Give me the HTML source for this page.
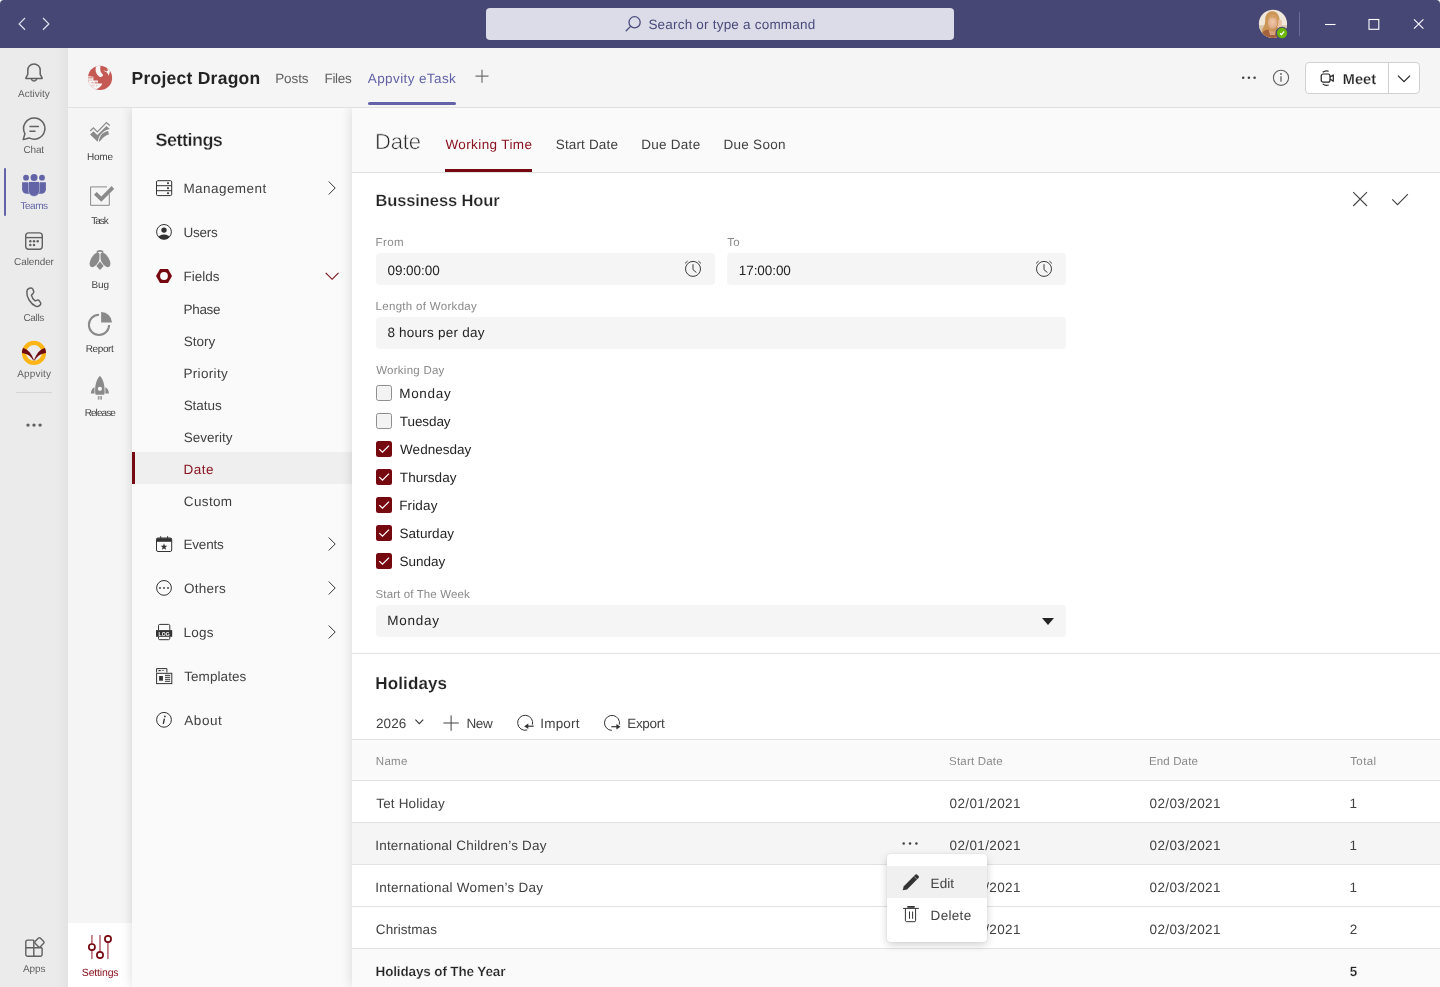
<!DOCTYPE html>
<html lang="en">
<head>
<meta charset="utf-8">
<title>Project Dragon - Appvity eTask - Settings</title>
<style>
*{box-sizing:border-box;margin:0;padding:0}
html,body{width:1440px;height:987px;overflow:hidden;background:#f5f5f5;font-family:"Liberation Sans",sans-serif;color:#252424}
.abs,.t{position:absolute}
.t{white-space:nowrap;line-height:1;text-rendering:geometricPrecision}
#topbg{left:0;top:0;width:1440px;height:8px;background:#fff}
#topbar{left:0;top:0;width:1440px;height:48px;background:#464775;border-radius:4px 4px 0 0}
#search{left:486px;top:8px;width:468px;height:32px;border-radius:4px;background:#dcdce8}
#rail{left:0;top:48px;width:68px;height:939px;background:#ebebeb}
#railsh{left:56px;top:48px;width:12px;height:939px;background:linear-gradient(90deg,rgba(0,0,0,0),rgba(0,0,0,.035))}
#chanhdr{left:68px;top:48px;width:1372px;height:60px;background:#f5f5f5;border-bottom:1px solid #e0e0e0}
#apprail{left:68px;top:108px;width:64px;height:879px;background:#f5f5f5}
#setpanel{left:132px;top:108px;width:220px;height:879px;background:#fafafa;box-shadow:0 0 11px rgba(0,0,0,.15);clip-path:inset(0 0 0 -20px)}
#content{left:352px;top:108px;width:1088px;height:879px;background:#fff;box-shadow:0 0 11px rgba(0,0,0,.15);clip-path:inset(0 0 0 -20px)}
#datehdr{left:352px;top:108px;width:1088px;height:65px;background:#fafafa;border-bottom:1px solid #e0e0e0}
#txt,#txt2{left:0;top:0;width:1440px;height:987px;will-change:transform}
</style>
</head>
<body>
<div id="topbg" class="abs"></div><div id="topbar" class="abs"></div><div id="search" class="abs"></div>
<div id="rail" class="abs"></div><div id="railsh" class="abs"></div>
<div id="chanhdr" class="abs"></div>
<div id="apprail" class="abs"></div>
<div class="abs" style="left:68px;top:923px;width:64px;height:64px;background:#fff"></div>
<div id="setpanel" class="abs"></div>
<div class="abs" style="left:132px;top:452px;width:220px;height:32px;background:#efefef"></div><div class="abs" style="left:132px;top:452px;width:3px;height:32px;background:#760810"></div>
<div id="content" class="abs"></div><div id="datehdr" class="abs"></div>
<svg class="abs" style="left:14px;top:14px" width="40" height="20" viewBox="0 0 40 20" ><g fill="none" stroke="#dfdfee" stroke-width="1.3"><path d="M11 4 5.2 9.9 11 15.8"/><path d="M29 4 34.8 9.9 29 15.8"/></g></svg>
<svg class="abs" style="left:622px;top:12px" width="24" height="24" viewBox="0 0 24 24" ><g fill="none" stroke="#4a4b7c" stroke-width="1.3" stroke-linecap="round"><circle cx="12.6" cy="10.3" r="5.6"/><path d="M8.6 14.4 4.2 18.8"/></g></svg>
<svg class="abs" style="left:1257px;top:8px" width="32" height="32" viewBox="0 0 32 32" ><defs><clipPath id="av"><circle cx="15.970" cy="15.800" r="14.100"/></clipPath><radialGradient id="fc" cx=".5" cy=".45" r=".6"><stop offset="0" stop-color="#f0c7a8"/><stop offset="1" stop-color="#dba683"/></radialGradient></defs>
<g clip-path="url(#av)"><rect width="32" height="32" fill="#efe7da"/><rect y="17.300" width="32" height="15" fill="#d9c6aa"/>
<path d="M15.500 3.300C10.500 3.300 8 7.500 8.200 12.600 8.300 16 6.800 18.500 5.200 21.700 4.500 25 6.500 28 9 30H20C19 26 19.500 22 21 19.500 22.800 16 23 12 22.100 8.900 21 5.200 18.500 3.300 15.500 3.300z" fill="#cb9558"/>
<ellipse cx="15.600" cy="14.600" rx="4.700" ry="6.200" fill="url(#fc)"/>
<path d="M10.600 12.500C10.800 8.500 13 6.500 16 6.600 19 6.700 21.200 9 21 12.800 19.500 10.500 17 9.300 14.500 9.400 12.500 9.500 11.300 10.800 10.600 12.500z" fill="#d4a062"/>
<path d="M21.300 12C22.500 11 24.500 11.300 24.900 13L24.600 19.500 21.500 21 20.300 18.500C21.300 16.500 21.500 14 21.300 12z" fill="#e9c3a8"/>
<path d="M3 32C3.500 25.500 7 21.500 11.500 21.500L14 25 19.800 21.200C21 24 20.500 28 20 32z" fill="#a5623c"/>
<path d="M11.500 20.500C12.500 22.500 14 23.500 15.500 23.500S18.500 22.500 19.500 20.500L18 27H13z" fill="#d9a27e"/></g>
<circle cx="25" cy="25" r="6.300" fill="#464775"/><circle cx="25" cy="25" r="5.150" fill="#6bb700"/>
<path d="M23.100 25.300 24.500 26.700 27.100 23.500" fill="none" stroke="#fff" stroke-width="1.300"/></svg>
<div class="abs" style="left:1299px;top:12px;width:1px;height:24px;background:#6c6d96"></div>
<svg class="abs" style="left:1320px;top:14px" width="110" height="20" viewBox="0 0 110 20" ><g fill="none" stroke="#fff" stroke-width="1.1"><path d="M5 10.5h10.5"/><rect x="49" y="5.5" width="9.8" height="9.8"/><path d="M94 5.3 103.4 14.7M103.4 5.3 94 14.7"/></g></svg>
<div class="abs" style="left:4px;top:168px;width:2px;height:48px;background:#6264a7;border-radius:1px"></div>
<svg class="abs" style="left:22px;top:60px" width="24" height="24" viewBox="0 0 24 24" ><g fill="none" stroke="#616161" stroke-width="1.500" stroke-linejoin="round"><path d="M12 4c-3.500 0-6.200 2.800-6.200 6.300v4.100l-1.900 3.400c-.2.400 0 .8.500.8h15.200c.5 0 .7-.4.500-.8l-1.900-3.400v-4.100c0-3.500-2.700-6.300-6.200-6.300z"/><path d="M9.300 18.900a2.800 2.800 0 0 0 5.400 0"/></g></svg>
<svg class="abs" style="left:20px;top:115px" width="28" height="28" viewBox="0 0 28 28" ><g fill="none" stroke="#616161" stroke-width="1.500" stroke-linecap="round" stroke-linejoin="round"><path d="M14.250 3a10.600 10.600 0 1 1-5 19.950L3.200 24.600l1.700-5.900A10.600 10.600 0 0 1 14.250 3z"/><path d="M10 11.500h8.400M10 16.300h5"/></g></svg>
<svg class="abs" style="left:20px;top:172px" width="28" height="26" viewBox="0 0 28 26" ><g fill="#6264a7"><circle cx="14.050" cy="5.400" r="3.500"/><circle cx="6.050" cy="5.700" r="2.900"/><circle cx="22" cy="5.700" r="2.900"/><path d="M2.100 10.200H10V21.800H6.700A4.600 4.600 0 0 1 2.100 17.200z"/><path d="M25.900 10.200H18V21.800H21.300A4.600 4.600 0 0 0 25.900 17.200z"/><path d="M9 10H19V18.900A5 5 0 0 1 9 18.900z" stroke="#b9bada" stroke-width="1.300"/><path d="M8 9.300H20V10.600H8z" fill="#ebebeb"/><path d="M9 10H19V18.900A5 5 0 0 1 9 18.900z"/></g></svg>
<svg class="abs" style="left:22px;top:229px" width="24" height="24" viewBox="0 0 24 24" ><g fill="none" stroke="#616161" stroke-width="1.4"><rect x="3.7" y="3.9" width="16.6" height="16.4" rx="3"/><path d="M3.7 8.6h16.6"/></g><g fill="#616161"><circle cx="8.300" cy="12.300" r="1.250"/><circle cx="12" cy="12.300" r="1.250"/><circle cx="15.700" cy="12.300" r="1.250"/><circle cx="8.300" cy="16.100" r="1.250"/><circle cx="12" cy="16.100" r="1.250"/></g></svg>
<svg class="abs" style="left:22px;top:284px" width="24" height="24" viewBox="0 0 24 24" ><path transform="translate(-1.1 .1) translate(12 12) scale(.92) translate(-12 -12)" d="M8.4 3.5l1.1-.3c.9-.3 1.9.2 2.3 1.1l1 2.3c.4.8.1 1.800-.5 2.4l-1.6 1.500c-.2.2-.3.5-.2.800.4 1.800 2.200 4.600 3.600 5.600.2.200.5.200.8.100l1.800-.6c.8-.3 1.800 0 2.300.8l1.300 1.900c.5.800.4 1.900-.3 2.500l-.9.800c-1 .9-2.400 1.200-3.700.7-5.800-2.300-10.500-9.900-10-16 .1-1.600 1.200-3 2.700-3.600z" fill="none" stroke="#616161" stroke-width="1.600" stroke-linejoin="round"/></svg>
<svg class="abs" style="left:21px;top:340px" width="26" height="26" viewBox="0 0 26 26" ><circle cx="12.970" cy="12.970" r="10" fill="none" stroke="#fcb514" stroke-width="4.250"/><g fill="#6e0a12"><path d="M2.100 7.900C4.500 8.600 7.500 10.500 8.900 12.600 10.300 14.600 11.700 17 12.700 19.400L12.400 20.700C10.900 18 9.800 16.900 8.400 15.700 6.500 14.200 4 13.300 1 12.900 .900 11.200 1.300 9.400 2.100 7.900z"/><path d="M23.840 7.900C21.440 8.600 18.440 10.500 17.040 12.600 15.640 14.600 14.240 17 13.240 19.400L13.540 20.700C15.040 18 16.140 16.900 17.540 15.700 19.440 14.200 21.940 13.300 24.940 12.900 25.040 11.200 24.640 9.400 23.840 7.900z"/></g></svg>
<div class="abs" style="left:16px;top:392px;width:36px;height:1px;background:#d4d4d4"></div>
<svg class="abs" style="left:24px;top:420px" width="20" height="10" viewBox="0 0 20 10" ><g fill="#616161"><circle cx="4" cy="5.1" r="1.7"/><circle cx="10" cy="5.1" r="1.7"/><circle cx="16.100" cy="5.1" r="1.7"/></g></svg>
<svg class="abs" style="left:22px;top:935px" width="26" height="24" viewBox="0 0 26 24" ><g fill="none" stroke="#616161" stroke-width="1.400" stroke-linejoin="round"><path d="M11.800 5.100H5.600A1.800 1.800 0 0 0 3.800 6.900V19.400A1.800 1.800 0 0 0 5.600 21.200H18.300A1.800 1.800 0 0 0 20.100 19.400V12.800"/><path d="M11.800 5.100V21.200M3.800 12.800H20.100"/><path d="M16.500 3.100a1.300 1.300 0 0 1 1.800 0l3.400 3.400a1.300 1.300 0 0 1 0 1.800l-3.400 3.400a1.300 1.300 0 0 1-1.800 0l-3.400-3.400a1.300 1.300 0 0 1 0-1.800z" fill="#ebebeb"/></g></svg>
<svg class="abs" style="left:86px;top:63px" width="28" height="28" viewBox="0 0 28 28" ><defs><clipPath id="lg"><circle cx="14.050" cy="14.900" r="12.100"/></clipPath></defs><g clip-path="url(#lg)"><rect width="28" height="28" fill="#c55a54"/><g fill="#f5f5f5"><path d="M10.300 2.500C8.800 7 9.600 11.300 13.900 13.900 15.500 14.300 17.300 13.300 17 11.600 15 10 13.500 7 14.600 3.300L12.400 2z"/><path d="M17.300 2.700C20.500 3.200 21.600 5.500 21.800 7.600L20 8.700C21.500 10 22.300 11.500 22.600 12.700L24.100 8.200 28 4V0H17z"/><path d="M17.200 7.100 20.600 8.400 19.500 9.100z"/><path d="M0 13 7.400 13.700V17.400H11.900V20.600H16.300C15.800 23 13 25.300 9.300 26.700L0 28z"/></g><g fill="#c55a54"><rect x="2.100" y="14" width="4.700" height="1.500" opacity=".55"/><rect x="2.300" y="16.500" width="4.300" height="1.200" opacity=".3"/><rect x="8.700" y="18.800" width="2.900" height="1.800" opacity=".6"/><rect x="5.200" y="19" width="2.600" height="1.300" opacity=".4"/><rect x="5.500" y="21.700" width="3.200" height="1.600" opacity=".22"/><rect x="10" y="22" width="1.600" height="1" opacity=".35"/></g></g></svg>
<div class="abs" style="left:368px;top:102px;width:88px;height:2.600px;background:#6264a7;border-radius:1.500px"></div>
<svg class="abs" style="left:474px;top:68px" width="16" height="16" viewBox="0 0 16 16" ><path d="M8 1.700v13M1.500 8.200h13" stroke="#717171" stroke-width="1.2" fill="none"/></svg>
<svg class="abs" style="left:1240px;top:72px" width="18" height="12" viewBox="0 0 18 12" ><g fill="#424242"><circle cx="3.200" cy="5.800" r="1.250"/><circle cx="8.900" cy="5.800" r="1.250"/><circle cx="14.600" cy="5.800" r="1.250"/></g></svg>
<svg class="abs" style="left:1271px;top:68px" width="20" height="20" viewBox="0 0 20 20" ><circle cx="10" cy="9.800" r="7.600" fill="none" stroke="#616161" stroke-width="1.1"/><path d="M10 8.300v5.500" stroke="#616161" stroke-width="1.300"/><circle cx="10" cy="6" r=".9" fill="#616161"/></svg>
<div class="abs" style="left:1305px;top:62px;width:115px;height:32px;background:#fff;border:1px solid #d1d1d1;border-radius:4px"></div><div class="abs" style="left:1388px;top:63px;width:1px;height:30px;background:#d1d1d1"></div>
<svg class="abs" style="left:1318px;top:68px" width="20" height="20" viewBox="0 0 20 20" ><g fill="none" stroke="#252424" stroke-width="1.200" stroke-linejoin="round"><rect x="3.200" y="6" width="8.800" height="8.200" rx="2"/><path d="M12 9.100 15.300 7v6.200L12 11.100"/><path d="M4.700 4.300a6.300 6.300 0 0 1 6-1.100M4.700 15.900a6.300 6.300 0 0 0 6 1.100"/></g></svg>
<svg class="abs" style="left:1396px;top:72px" width="16" height="12" viewBox="0 0 16 12" ><path d="M2 3.600 8 9.600 14 3.600" fill="none" stroke="#252424" stroke-width="1.200"/></svg>
<svg class="abs" style="left:88px;top:120px" width="26" height="26" viewBox="0 0 26 26" ><path d="M2.250 11.050 5.400 7.800 9.350 11.900 18.400 2.550 21.800 5.500" fill="none" stroke="#8a8a8a" stroke-width="1.250"/><path d="M2.100 14.450 5.400 11.200 9.350 15 18.400 5.950 21.800 9.050C18 9.800 14.500 12 12.600 14.500 11 16.600 10.200 19 9.900 21.300L9.350 21.500z" fill="#8a8a8a"/><path d="M10.800 21.500C11.200 19 11.800 17 13 15.200 14.800 12.800 17.300 11.600 20.100 11.050L21 14.450C18.500 15 16 16.600 14.300 18.500 13.200 19.800 12.400 20.600 11.900 21.500z" fill="#8a8a8a"/></svg>
<svg class="abs" style="left:88px;top:184px" width="28" height="24" viewBox="0 0 28 24" ><path d="M21.300 9.800V21.300H2.600V2.900H19" fill="none" stroke="#8a8a8a" stroke-width="1" stroke-linejoin="round"/><path d="M6 10.800 8.700 7.900 13.300 12.400 23.700 2 26.100 4.900 13.300 17.800z" fill="#8a8a8a"/></svg>
<svg class="abs" style="left:88px;top:248px" width="24" height="24" viewBox="0 0 24 24" ><defs><clipPath id="bl"><rect x="0" y="0" width="11.450" height="24"/></clipPath><clipPath id="br"><rect x="12.550" y="0" width="11.450" height="24"/></clipPath></defs><path d="M8.900 4.700A3.300 2.900 0 0 1 15.100 4.700" fill="none" stroke="#8a8a8a" stroke-width="1.700"/><g fill="#8a8a8a"><g clip-path="url(#bl)"><ellipse cx="6.900" cy="11.900" rx="4" ry="8" transform="rotate(30 6.900 11.900)"/></g><g clip-path="url(#br)"><ellipse cx="17.100" cy="11.900" rx="4" ry="8" transform="rotate(-30 17.100 11.900)"/></g><path d="M12 13.600 15.600 17.900 12 21.900 8.400 17.900z"/></g></svg>
<svg class="abs" style="left:86px;top:310px" width="28" height="28" viewBox="0 0 28 28" ><path d="M13 4.800A10.100 10.100 0 1 0 23.100 14.900" fill="none" stroke="#8a8a8a" stroke-width="2"/><path d="M15.100 2.100A10.800 10.800 0 0 1 26 12.500H15.100z" fill="#8a8a8a"/></svg>
<svg class="abs" style="left:88px;top:374px" width="24" height="28" viewBox="0 0 24 28" ><g fill="#8a8a8a"><path d="M11.900 1.700C15.300 5.500 17 10.500 16.600 19.300 16.600 20.300 15.800 20.800 14.800 20.800H9C8 20.800 7.200 20.300 7.200 19.300 6.800 10.500 8.500 5.500 11.900 1.700z"/><path d="M6.500 13.300V19.600H2.900C2.900 16.800 4.200 14.500 6.500 13.300z"/><path d="M17.300 13.300V19.600H20.900C20.900 16.800 19.600 14.500 17.300 13.300z"/></g><circle cx="11.900" cy="14.800" r="2.100" fill="#f5f5f5"/><g fill="#9c9c9c"><rect x="9.800" y="22.100" width="1.700" height="3.500"/><rect x="12.300" y="22.100" width="1.700" height="3.500"/></g></svg>
<svg class="abs" style="left:86px;top:933px" width="28" height="28" viewBox="0 0 28 28" ><g stroke="#b4656c" stroke-width="1.500"><path d="M5.900 2.100v24M14 2.100v24M21.900 2.100v24"/></g><g fill="#fff" stroke="#760810" stroke-width="1.700"><circle cx="5.900" cy="14.100" r="3.100"/><circle cx="14" cy="22" r="3.100"/><circle cx="22" cy="6" r="3.100"/></g></svg>
<svg class="abs" style="left:155px;top:179px" width="18" height="18" viewBox="0 0 18 18" ><g fill="none" stroke="#333333" stroke-width="1"><rect x="1.500" y="1.700" width="15.200" height="14.900" rx="1.200"/><path d="M1.500 6.700h15.200M1.500 11.700h15.200"/></g><g fill="#333333"><rect x="12.100" y="3.300" width="1.800" height="1.800"/><rect x="12.100" y="8.300" width="1.800" height="1.800"/><rect x="12.100" y="13.300" width="1.800" height="1.800"/></g></svg>
<svg class="abs" style="left:155px;top:223px" width="18" height="18" viewBox="0 0 18 18" ><defs><clipPath id="uc"><circle cx="9" cy="8.900" r="7.400"/></clipPath></defs><circle cx="9" cy="8.900" r="7.400" fill="none" stroke="#333333" stroke-width="1"/><circle cx="9" cy="7.100" r="2.700" fill="#333333"/><ellipse cx="9" cy="15.500" rx="6.200" ry="4" fill="#333333" clip-path="url(#uc)"/></svg>
<svg class="abs" style="left:155px;top:268px" width="18" height="16" viewBox="0 0 18 16" ><path d="M1 8 5 1h8l4 7-4 7H5z" fill="#760810"/><circle cx="9" cy="8" r="3.900" fill="#fafafa"/></svg>
<svg class="abs" style="left:326px;top:180px" width="12" height="16" viewBox="0 0 12 16" ><path d="M2.700 1.500 9.200 8 2.700 14.500" fill="none" stroke="#333333" stroke-width="1"/></svg>
<svg class="abs" style="left:326px;top:536px" width="12" height="16" viewBox="0 0 12 16" ><path d="M2.700 1.500 9.200 8 2.700 14.500" fill="none" stroke="#333333" stroke-width="1"/></svg>
<svg class="abs" style="left:326px;top:580px" width="12" height="16" viewBox="0 0 12 16" ><path d="M2.700 1.500 9.200 8 2.700 14.500" fill="none" stroke="#333333" stroke-width="1"/></svg>
<svg class="abs" style="left:326px;top:624px" width="12" height="16" viewBox="0 0 12 16" ><path d="M2.700 1.500 9.200 8 2.700 14.500" fill="none" stroke="#333333" stroke-width="1"/></svg>
<svg class="abs" style="left:324px;top:270px" width="16" height="12" viewBox="0 0 16 12" ><path d="M1.700 2.900 8.100 9.300 14.500 2.900" fill="none" stroke="#760810" stroke-width="1.100"/></svg>
<svg class="abs" style="left:155px;top:535px" width="18" height="18" viewBox="0 0 18 18" ><rect x="1.500" y="3" width="15.200" height="13.500" rx="1.500" fill="none" stroke="#333333" stroke-width="1"/><path d="M1.500 3.200h15.200v3.600H1.500z" fill="#333333"/><path d="M5.700 1.200v2.500M12.600 1.200v2.500" stroke="#333333" stroke-width="1"/><path d="M9 8.300 9.900 10.700 12.400 10.800 10.400 12.300 11.100 14.800 9 13.400 6.900 14.800 7.600 12.300 5.600 10.800 8.100 10.700z" fill="#333333"/></svg>
<svg class="abs" style="left:155px;top:579px" width="18" height="18" viewBox="0 0 18 18" ><circle cx="9" cy="8.900" r="7.400" fill="none" stroke="#333333" stroke-width="1"/><g fill="#333333"><circle cx="5" cy="8.900" r=".95"/><circle cx="9" cy="8.900" r=".95"/><circle cx="13" cy="8.900" r=".95"/></g></svg>
<svg class="abs" style="left:155px;top:623px;will-change:transform" width="18" height="18" viewBox="0 0 18 18" ><path d="M3.500 7V2.700A1.300 1.300 0 0 1 4.800 1.400h8.700a1.300 1.300 0 0 1 1.300 1.300V7M3.500 14v1.400a1.300 1.300 0 0 0 1.300 1.300h8.700a1.300 1.300 0 0 0 1.300-1.300V14" fill="none" stroke="#333333" stroke-width="1"/><rect x="1" y="7.100" width="16.200" height="6.700" fill="#333333"/><text x="9.100" y="12.500" font-family="Liberation Sans,sans-serif" font-size="5.600" font-weight="700" fill="#fff" text-anchor="middle" textLength="11" lengthAdjust="spacingAndGlyphs">LOG</text></svg>
<svg class="abs" style="left:155px;top:667px" width="18" height="18" viewBox="0 0 18 18" ><g fill="none" stroke="#333333" stroke-width="1"><path d="M1.600 5.500V1.600h10.300v3.900"/><rect x="1.600" y="6.300" width="15.200" height="10.300"/><path d="M10 8.300h5.200M10 10.300h5.200M10 12.300h5.200M10 14.300h5.200"/></g><rect x="4.100" y="9" width="3.800" height="4.700" fill="#333333"/><rect x="3.500" y="3" width="2.200" height="1.200" fill="#333333"/><rect x="6.700" y="3.100" width="2.400" height=".9" fill="#777"/></svg>
<svg class="abs" style="left:155px;top:711px" width="18" height="18" viewBox="0 0 18 18" ><circle cx="9" cy="8.800" r="7.400" fill="none" stroke="#333333" stroke-width="1"/><path d="M9.400 7.600 8.300 12.800" stroke="#333333" stroke-width="1.400"/><circle cx="9.900" cy="5.400" r=".9" fill="#333333"/></svg>
<div class="abs" style="left:445px;top:169px;width:87px;height:3px;background:#760810;"></div>
<svg class="abs" style="left:1350px;top:189px" width="20" height="20" viewBox="0 0 20 20" ><path d="M3.200 3.200 17 17M17 3.200 3.200 17" stroke="#424242" stroke-width="1.100" fill="none"/></svg>
<svg class="abs" style="left:1390px;top:190px" width="20" height="18" viewBox="0 0 20 18" ><path d="M2.200 9.300 7.500 14.600 17.900 4.200" stroke="#424242" stroke-width="1.100" fill="none"/></svg>
<div class="abs" style="left:376px;top:253px;width:339px;height:32px;background:#f5f5f5;border-radius:4px"></div>
<div class="abs" style="left:727px;top:253px;width:339px;height:32px;background:#f5f5f5;border-radius:4px"></div>
<div class="abs" style="left:376px;top:317px;width:690px;height:32px;background:#f5f5f5;border-radius:4px"></div>
<div class="abs" style="left:376px;top:605px;width:690px;height:32px;background:#f5f5f5;border-radius:4px"></div>
<svg class="abs" style="left:683px;top:259px" width="20" height="20" viewBox="0 0 20 20" ><g fill="none" stroke="#333333" stroke-width=".95"><circle cx="10" cy="9.900" r="7.500"/><path d="M10 5.200v5.500l3.400 2.800"/><path d="M2.100 4.400 4.600 2.100M15.400 2.100 17.900 4.400"/></g></svg>
<svg class="abs" style="left:1034px;top:259px" width="20" height="20" viewBox="0 0 20 20" ><g fill="none" stroke="#333333" stroke-width=".95"><circle cx="10" cy="9.900" r="7.500"/><path d="M10 5.200v5.500l3.400 2.800"/><path d="M2.100 4.400 4.600 2.100M15.400 2.100 17.900 4.400"/></g></svg>
<svg class="abs" style="left:1040px;top:616px" width="16" height="10" viewBox="0 0 16 10" ><path d="M2 2h12L8 9z" fill="#252424"/></svg>
<div class="abs" style="left:376px;top:385px;width:16px;height:16px;background:#f3f3f3;border:1px solid #8f8f8f;border-radius:2.500px"></div>
<div class="abs" style="left:376px;top:413px;width:16px;height:16px;background:#f3f3f3;border:1px solid #8f8f8f;border-radius:2.500px"></div>
<div class="abs" style="left:376px;top:441px;width:16px;height:16px;background:#760810;border-radius:2.500px"></div>
<svg class="abs" style="left:376px;top:441px" width="16" height="16" viewBox="0 0 16 16" ><path d="M3.300 8.100 6.500 11.200 13 4.600" fill="none" stroke="#fff" stroke-width="1.300"/></svg>
<div class="abs" style="left:376px;top:469px;width:16px;height:16px;background:#760810;border-radius:2.500px"></div>
<svg class="abs" style="left:376px;top:469px" width="16" height="16" viewBox="0 0 16 16" ><path d="M3.300 8.100 6.500 11.200 13 4.600" fill="none" stroke="#fff" stroke-width="1.300"/></svg>
<div class="abs" style="left:376px;top:497px;width:16px;height:16px;background:#760810;border-radius:2.500px"></div>
<svg class="abs" style="left:376px;top:497px" width="16" height="16" viewBox="0 0 16 16" ><path d="M3.300 8.100 6.500 11.200 13 4.600" fill="none" stroke="#fff" stroke-width="1.300"/></svg>
<div class="abs" style="left:376px;top:525px;width:16px;height:16px;background:#760810;border-radius:2.500px"></div>
<svg class="abs" style="left:376px;top:525px" width="16" height="16" viewBox="0 0 16 16" ><path d="M3.300 8.100 6.500 11.200 13 4.600" fill="none" stroke="#fff" stroke-width="1.300"/></svg>
<div class="abs" style="left:376px;top:553px;width:16px;height:16px;background:#760810;border-radius:2.500px"></div>
<svg class="abs" style="left:376px;top:553px" width="16" height="16" viewBox="0 0 16 16" ><path d="M3.300 8.100 6.500 11.200 13 4.600" fill="none" stroke="#fff" stroke-width="1.300"/></svg>
<div class="abs" style="left:352px;top:653px;width:1088px;height:1px;background:#e3e3e3;"></div>
<svg class="abs" style="left:413px;top:717px" width="12" height="10" viewBox="0 0 12 10" ><path d="M2.400 2.700 6.300 6.600 10.200 2.700" fill="none" stroke="#333333" stroke-width="1.100"/></svg>
<svg class="abs" style="left:443px;top:715px" width="16" height="16" viewBox="0 0 16 16" ><path d="M8.100 .400v15.400M.400 8h15.400" stroke="#424242" stroke-width="1" fill="none"/></svg>
<svg class="abs" style="left:515px;top:713px" width="20" height="20" viewBox="0 0 20 20" ><path d="M17.400 11.700A7.500 7.500 0 1 0 12.200 17" fill="none" stroke="#333333" stroke-width="1"/><path d="M18.600 13.200H12" stroke="#333333" stroke-width="1.200"/><path d="M9.200 13.200 13.300 10.400V16z" fill="#333333"/></svg>
<svg class="abs" style="left:602px;top:713px" width="20" height="20" viewBox="0 0 20 20" ><path d="M17.300 11.700A7.500 7.500 0 1 0 9.800 17.400" fill="none" stroke="#333333" stroke-width="1"/><path d="M9.300 13.700H15.500" stroke="#333333" stroke-width="1.200"/><path d="M18.500 13.700 14.400 10.900V16.500z" fill="#333333"/></svg>
<div class="abs" style="left:352px;top:739px;width:1088px;height:1px;background:#e3e3e3;"></div>
<div class="abs" style="left:352px;top:740px;width:1088px;height:40px;background:#fafafa;"></div>
<div class="abs" style="left:352px;top:780px;width:1088px;height:1px;background:#e3e3e3;"></div>
<div class="abs" style="left:352px;top:822px;width:1088px;height:1px;background:#e3e3e3;"></div>
<div class="abs" style="left:352px;top:864px;width:1088px;height:1px;background:#e3e3e3;"></div>
<div class="abs" style="left:352px;top:906px;width:1088px;height:1px;background:#e3e3e3;"></div>
<div class="abs" style="left:352px;top:948px;width:1088px;height:1px;background:#e3e3e3;"></div>
<div class="abs" style="left:352px;top:823px;width:1088px;height:41px;background:#f5f5f5;"></div>
<div class="abs" style="left:352px;top:949px;width:1088px;height:38px;background:#fafafa;"></div>
<svg class="abs" style="left:900px;top:839px" width="20" height="10" viewBox="0 0 20 10" ><g fill="#424242"><circle cx="3.700" cy="4.600" r="1.250"/><circle cx="10" cy="4.600" r="1.250"/><circle cx="16.400" cy="4.600" r="1.250"/></g></svg>
<div id="txt" class="abs">
<span class="t" style="left:648.42px;top:18.00px;font-size:13.5px;color:#4a4b7c;letter-spacing:0.206px">Search or type a command</span>
<span class="t" style="left:131.56px;top:70.00px;font-size:17.5px;color:#252424;font-weight:700;letter-spacing:0.249px">Project Dragon</span>
<span class="t" style="left:275.20px;top:72.00px;font-size:13.5px;color:#616161;letter-spacing:-0.089px">Posts</span>
<span class="t" style="left:324.43px;top:72.00px;font-size:13.5px;color:#616161;letter-spacing:-0.283px">Files</span>
<span class="t" style="left:367.81px;top:72.00px;font-size:13.5px;color:#6264a7;letter-spacing:0.393px">Appvity eTask</span>
<span class="t" style="left:1342.72px;top:73.00px;font-size:14.5px;color:#252424;font-weight:700;letter-spacing:0.100px;-webkit-text-stroke:0.2px #fff">Meet</span>
<span class="t" style="left:18.09px;top:90.00px;font-size:10px;color:#616161;letter-spacing:-0.009px">Activity</span>
<span class="t" style="left:23.59px;top:146.00px;font-size:10px;color:#616161;letter-spacing:-0.201px">Chat</span>
<span class="t" style="left:14.12px;top:258.00px;font-size:10px;color:#616161;letter-spacing:-0.110px">Calender</span>
<span class="t" style="left:23.44px;top:314.00px;font-size:10px;color:#616161;letter-spacing:-0.352px">Calls</span>
<span class="t" style="left:17.23px;top:370.00px;font-size:10px;color:#616161;letter-spacing:0.172px">Appvity</span>
<span class="t" style="left:22.97px;top:965.00px;font-size:10px;color:#616161;letter-spacing:-0.079px">Apps</span>
<span class="t" style="left:20.53px;top:202.00px;font-size:10px;color:#6264a7;letter-spacing:-0.502px">Teams</span>
<span class="t" style="left:86.89px;top:153.00px;font-size:10px;color:#424242;letter-spacing:-0.204px">Home</span>
<span class="t" style="left:91.20px;top:217.00px;font-size:10px;color:#424242;letter-spacing:-1.025px">Task</span>
<span class="t" style="left:91.59px;top:281.00px;font-size:10px;color:#424242;letter-spacing:-0.135px">Bug</span>
<span class="t" style="left:85.65px;top:345.00px;font-size:10px;color:#424242;letter-spacing:-0.364px">Report</span>
<span class="t" style="left:84.65px;top:409.00px;font-size:10px;color:#424242;letter-spacing:-0.912px">Release</span>
<span class="t" style="left:81.87px;top:968.00px;font-size:10.5px;color:#8a1420;letter-spacing:-0.174px">Settings</span>
<span class="t" style="left:155.38px;top:131.00px;font-size:18px;color:#252424;font-weight:700;letter-spacing:-0.500px;-webkit-text-stroke:0.28px #fafafa">Settings</span>
<span class="t" style="left:183.41px;top:182.00px;font-size:13.5px;color:#424242;letter-spacing:0.441px">Management</span>
<span class="t" style="left:183.62px;top:226.00px;font-size:13.5px;color:#424242;letter-spacing:-0.259px">Users</span>
<span class="t" style="left:183.41px;top:270.00px;font-size:13.5px;color:#424242;letter-spacing:0.017px">Fields</span>
<span class="t" style="left:183.41px;top:303.00px;font-size:13.5px;color:#424242;letter-spacing:-0.271px">Phase</span>
<span class="t" style="left:183.63px;top:335.00px;font-size:13.5px;color:#424242;letter-spacing:0.053px">Story</span>
<span class="t" style="left:183.41px;top:367.00px;font-size:13.5px;color:#424242;letter-spacing:0.336px">Priority</span>
<span class="t" style="left:183.63px;top:399.00px;font-size:13.5px;color:#424242;letter-spacing:-0.026px">Status</span>
<span class="t" style="left:183.63px;top:431.00px;font-size:13.5px;color:#424242;letter-spacing:0.018px">Severity</span>
<span class="t" style="left:183.40px;top:463.00px;font-size:13.5px;color:#8a1420;letter-spacing:0.511px">Date</span>
<span class="t" style="left:183.87px;top:495.00px;font-size:13.5px;color:#424242;letter-spacing:0.348px">Custom</span>
<span class="t" style="left:183.41px;top:538.00px;font-size:13.5px;color:#424242;letter-spacing:-0.166px">Events</span>
<span class="t" style="left:184.02px;top:582.00px;font-size:13.5px;color:#424242;letter-spacing:0.244px">Others</span>
<span class="t" style="left:183.41px;top:626.00px;font-size:13.5px;color:#424242;letter-spacing:0.240px">Logs</span>
<span class="t" style="left:184.22px;top:670.00px;font-size:13.5px;color:#424242;letter-spacing:0.067px">Templates</span>
<span class="t" style="left:184.25px;top:714.00px;font-size:13.5px;color:#424242;letter-spacing:0.567px">About</span>
<span class="t" style="left:375.00px;top:131.00px;font-size:22px;color:#2b2b2b;letter-spacing:-0.197px;-webkit-text-stroke:0.55px #fafafa">Date</span>
<span class="t" style="left:445.47px;top:138.00px;font-size:13.5px;color:#8a1420;letter-spacing:0.382px">Working Time</span>
<span class="t" style="left:555.75px;top:138.00px;font-size:13.5px;color:#424242;letter-spacing:0.151px">Start Date</span>
<span class="t" style="left:641.16px;top:138.00px;font-size:13.5px;color:#424242;letter-spacing:0.280px">Due Date</span>
<span class="t" style="left:723.41px;top:138.00px;font-size:13.5px;color:#424242;letter-spacing:0.290px">Due Soon</span>
<span class="t" style="left:375.43px;top:193.00px;font-size:16.5px;color:#252424;font-weight:700;letter-spacing:-0.102px;-webkit-text-stroke:0.25px #fff">Bussiness Hour</span>
<span class="t" style="left:375.52px;top:238.00px;font-size:11.5px;color:#8a8a8a;letter-spacing:0.429px">From</span>
<span class="t" style="left:727.19px;top:238.00px;font-size:11.5px;color:#8a8a8a;letter-spacing:0.288px">To</span>
<span class="t" style="left:387.51px;top:264.00px;font-size:13.5px;color:#252424;letter-spacing:-0.049px">09:00:00</span>
<span class="t" style="left:738.75px;top:264.00px;font-size:13.5px;color:#252424;letter-spacing:-0.068px">17:00:00</span>
<span class="t" style="left:375.52px;top:302.00px;font-size:11.5px;color:#8a8a8a;letter-spacing:0.312px">Length of Workday</span>
<span class="t" style="left:387.41px;top:326.00px;font-size:13.5px;color:#252424;letter-spacing:0.229px">8 hours per day</span>
<span class="t" style="left:376.21px;top:366.00px;font-size:11.5px;color:#8a8a8a;letter-spacing:0.254px">Working Day</span>
<span class="t" style="left:399.17px;top:387.00px;font-size:13.5px;color:#252424;letter-spacing:0.727px">Monday</span>
<span class="t" style="left:399.85px;top:415.00px;font-size:13.5px;color:#252424;letter-spacing:-0.087px">Tuesday</span>
<span class="t" style="left:400.12px;top:443.00px;font-size:13.5px;color:#252424;letter-spacing:0.015px">Wednesday</span>
<span class="t" style="left:399.85px;top:471.00px;font-size:13.5px;color:#252424;letter-spacing:0.053px">Thursday</span>
<span class="t" style="left:399.17px;top:499.00px;font-size:13.5px;color:#252424;letter-spacing:0.151px">Friday</span>
<span class="t" style="left:399.39px;top:527.00px;font-size:13.5px;color:#252424;letter-spacing:0.093px">Saturday</span>
<span class="t" style="left:399.39px;top:555.00px;font-size:13.5px;color:#252424">Sunday</span>
<span class="t" style="left:375.56px;top:590.00px;font-size:11.5px;color:#8a8a8a;letter-spacing:0.120px">Start of The Week</span>
<span class="t" style="left:387.27px;top:614.00px;font-size:13.5px;color:#252424;letter-spacing:0.736px">Monday</span>
<span class="t" style="left:375.31px;top:675.00px;font-size:17px;color:#252424;font-weight:700;letter-spacing:0.126px;-webkit-text-stroke:0.12px #fff">Holidays</span>
<span class="t" style="left:375.99px;top:717.00px;font-size:13.5px;color:#424242;letter-spacing:0.083px">2026</span>
<span class="t" style="left:466.41px;top:717.00px;font-size:13.5px;color:#424242;letter-spacing:-0.314px">New</span>
<span class="t" style="left:540.21px;top:717.00px;font-size:13.5px;color:#424242;letter-spacing:0.217px">Import</span>
<span class="t" style="left:627.20px;top:717.00px;font-size:13.5px;color:#424242;letter-spacing:-0.308px">Export</span>
<span class="t" style="left:375.77px;top:757.00px;font-size:11.5px;color:#8a8a8a;letter-spacing:0.312px">Name</span>
<span class="t" style="left:949.11px;top:757.00px;font-size:11.5px;color:#8a8a8a;letter-spacing:0.184px">Start Date</span>
<span class="t" style="left:1149.00px;top:757.00px;font-size:11.5px;color:#8a8a8a;letter-spacing:0.129px">End Date</span>
<span class="t" style="left:1350.24px;top:757.00px;font-size:11.5px;color:#8a8a8a;letter-spacing:0.379px">Total</span>
<span class="t" style="left:376.22px;top:797.00px;font-size:13.5px;color:#424242;letter-spacing:0.165px">Tet Holiday</span>
<span class="t" style="left:949.52px;top:797.00px;font-size:13.5px;color:#424242;letter-spacing:0.381px">02/01/2021</span>
<span class="t" style="left:1149.52px;top:797.00px;font-size:13.5px;color:#424242;letter-spacing:0.381px">02/03/2021</span>
<span class="t" style="left:1349.49px;top:797.00px;font-size:13.5px;color:#424242">1</span>
<span class="t" style="left:375.22px;top:839.00px;font-size:13.5px;color:#424242;letter-spacing:0.212px">International Children’s Day</span>
<span class="t" style="left:949.52px;top:839.00px;font-size:13.5px;color:#424242;letter-spacing:0.381px">02/01/2021</span>
<span class="t" style="left:1149.52px;top:839.00px;font-size:13.5px;color:#424242;letter-spacing:0.381px">02/03/2021</span>
<span class="t" style="left:1349.49px;top:839.00px;font-size:13.5px;color:#424242">1</span>
<span class="t" style="left:375.21px;top:881.00px;font-size:13.5px;color:#424242;letter-spacing:0.258px">International Women’s Day</span>
<span class="t" style="left:949.52px;top:881.00px;font-size:13.5px;color:#424242;letter-spacing:0.381px">02/01/2021</span>
<span class="t" style="left:1149.52px;top:881.00px;font-size:13.5px;color:#424242;letter-spacing:0.381px">02/03/2021</span>
<span class="t" style="left:1349.49px;top:881.00px;font-size:13.5px;color:#424242">1</span>
<span class="t" style="left:375.87px;top:923.00px;font-size:13.5px;color:#424242;letter-spacing:0.037px">Christmas</span>
<span class="t" style="left:949.52px;top:923.00px;font-size:13.5px;color:#424242;letter-spacing:0.381px">02/01/2021</span>
<span class="t" style="left:1149.52px;top:923.00px;font-size:13.5px;color:#424242;letter-spacing:0.381px">02/03/2021</span>
<span class="t" style="left:1349.78px;top:923.00px;font-size:13.5px;color:#424242">2</span>
<span class="t" style="left:375.54px;top:965.00px;font-size:13.5px;color:#252424;font-weight:700;letter-spacing:-0.142px;-webkit-text-stroke:0.2px #fafafa">Holidays of The Year</span>
<span class="t" style="left:1349.79px;top:965.00px;font-size:13.5px;color:#252424;font-weight:700;-webkit-text-stroke:0.2px #fafafa">5</span>
</div>
<div class="abs" style="left:887px;top:854px;width:100px;height:88px;background:#fff;border-radius:4px;box-shadow:0 3px 8px rgba(0,0,0,.18),0 0 2px rgba(0,0,0,.10)"></div>
<div class="abs" style="left:887px;top:866px;width:100px;height:32px;background:#f0f0f0;"></div>
<svg class="abs" style="left:900px;top:872px" width="22" height="20" viewBox="0 0 22 20" ><path d="M2.700 18.200 3.800 14.300 15.500 2.600a1.100 1.100 0 0 1 1.500 0l1.700 1.700a1.100 1.100 0 0 1 0 1.500L7 17.400z" fill="#333333"/><path d="M14 4.300 17.200 7.500" stroke="#bdbdbd" stroke-width=".7"/></svg>
<svg class="abs" style="left:900px;top:904px" width="22" height="20" viewBox="0 0 22 20" ><g fill="none" stroke="#333333" stroke-width="1"><path d="M3.100 4.400H18.900"/><path d="M5.400 4.600V16.300a1.400 1.400 0 0 0 1.400 1.400h7.400a1.400 1.400 0 0 0 1.400-1.400V4.600"/><path d="M9.500 7.500v7.300M12.600 7.500v7.300"/></g><rect x="7.400" y="2" width="7.300" height="1.800" fill="#333333"/></svg>
<div id="txt2" class="abs">
<span class="t" style="left:930.61px;top:877.00px;font-size:13.5px;color:#424242;letter-spacing:0.033px">Edit</span>
<span class="t" style="left:930.61px;top:909.00px;font-size:13.5px;color:#424242;letter-spacing:0.301px">Delete</span>
</div>
</body>
</html>
